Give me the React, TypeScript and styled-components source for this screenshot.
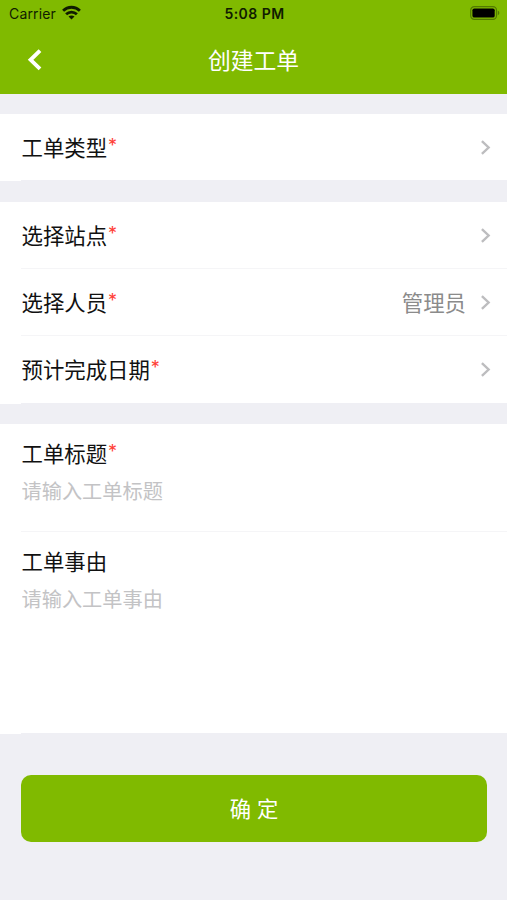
import React from "react";
import styled, { createGlobalStyle } from "styled-components";

const GREEN = "#80ba00";
const GROUND = "#efeff4";

const GlobalStyle = createGlobalStyle`
  * { box-sizing: border-box; }
  body {
    margin: 0;
    background: ${GROUND};
    font-family: Inter, "Noto Sans CJK SC", sans-serif;
  }
`;

const Screen = styled.main`
  width: 507px;
  height: 900px;
  overflow: hidden;
  background: ${GROUND};
`;

const Header = styled.header`
  height: 94px;
  background: ${GREEN};
`;

const StatusBar = styled.div`
  display: grid;
  grid-template-columns: 1fr auto 1fr;
  align-items: center;
  height: 27px;
  padding: 0 7px 0 9px;
  color: #101c00;
  font-size: 14px;
  line-height: 27px;
`;

const Carrier = styled.div`
  display: flex;
  align-items: center;
  gap: 6px;
  letter-spacing: 0.15px;

  svg {
    margin-bottom: 2px;
  }
`;

const Clock = styled.div`
  font-size: 14px;
  font-weight: 600;
  letter-spacing: 0.45px;
`;

const BatterySlot = styled.div`
  display: flex;
  justify-content: flex-end;
  padding-bottom: 1px;
`;

const NavBar = styled.div`
  display: grid;
  grid-template-columns: 60px 1fr 60px;
  align-items: center;
  height: 66px;
`;

const BackButton = styled.button`
  display: flex;
  height: 44px;
  padding: 0 0 0 27px;
  align-items: center;
  border: 0;
  background: none;
`;

const Title = styled.h1`
  margin: 0;
  padding-top: 2px;
  color: #fff;
  font-size: 22.8px;
  font-weight: 400;
  line-height: 34px;
  text-align: center;
`;

const Group = styled.section<{ $gap: number }>`
  margin-top: ${(p) => p.$gap}px;
  background: #fff;
`;

const Row = styled.div<{ $height: number; $last?: boolean }>`
  display: flex;
  align-items: center;
  height: ${(p) => p.$height}px;
  margin-left: 21px;
  padding: 0 16px 0 0.5px;
  border-bottom: 1px solid ${(p) => (p.$last ? GROUND : "#f5f5f7")};
`;

const Label = styled.span`
  padding-top: 1px;
  color: #111;
  font-size: 21.4px;
  line-height: 32px;
  white-space: nowrap;
`;

const Required = styled.span`
  margin-left: 1px;
  color: #ff4036;
  font-size: 18px;
  line-height: 1;
  vertical-align: 4px;
`;

const Value = styled.span`
  margin-left: auto;
  padding-top: 1px;
  color: #8b8b8b;
  font-size: 21.4px;
  line-height: 32px;
`;

const Arrow = styled.svg<{ $push: boolean }>`
  margin-left: ${(p) => (p.$push ? "auto" : "15px")};
  flex: none;
`;

const Field = styled.label<{ $height: number; $last?: boolean }>`
  display: flex;
  flex-direction: column;
  height: ${(p) => p.$height}px;
  margin-left: 21px;
  padding: 13px 20px 0 0.5px;
  border-bottom: 1px solid ${(p) => (p.$last ? GROUND : "#f5f5f7")};
`;

const Input = styled.input`
  height: 34px;
  margin-top: 4px;
  padding: 0;
  border: 0;
  outline: 0;
  background: transparent;
  color: #111;
  font: 400 20.2px/30px Inter, "Noto Sans CJK SC", sans-serif;

  &::placeholder {
    color: #c3c3c5;
    opacity: 1;
  }
`;

const Submit = styled.button`
  display: block;
  width: 466px;
  height: 67px;
  margin: 41px 0 0 21px;
  padding: 0;
  border: 0;
  border-radius: 10px;
  background: ${GREEN};
  color: #fff;
  font: 400 21.3px/32px Inter, "Noto Sans CJK SC", sans-serif;
`;

const WifiIcon = () => (
  <svg width="19" height="15" viewBox="0 0 19 15" fill="none" stroke="#101c00" strokeWidth="2.8">
    <path d="M1.1 5.7C5.8 1.1 13.2 1.1 17.9 5.7" />
    <path d="M4.1 9.2C7.1 6.3 11.9 6.3 14.9 9.2" />
    <path d="M6.5 11.6c1.7-1.6 4.3-1.6 6 0l-3 2.9z" fill="#101c00" stroke="none" />
  </svg>
);

const BatteryIcon = () => (
  <svg width="30" height="14" viewBox="0 0 30 14">
    <rect x=".7" y=".7" width="25.8" height="12.6" rx="3.6" fill="none" stroke="#527a00" strokeWidth="1.2" />
    <rect x="2.4" y="2.4" width="22.3" height="9.2" rx="1.9" fill="#000" />
    <path d="M27.8 4.8c2 .6 2 3.8 0 4.4z" fill="#527a00" />
  </svg>
);

const Chevron = ({ push = true }: { push?: boolean }) => (
  <Arrow $push={push} width="10" height="15" viewBox="0 0 10 15" fill="none" stroke="#bdbdbf" strokeWidth="2.4">
    <path d="M.9 1.2 7.6 7.5.9 13.8" />
  </Arrow>
);

interface LabelProps {
  text: string;
  required?: boolean;
}

const FieldLabel = ({ text, required }: LabelProps) => (
  <Label>
    {text}
    {required && <Required>*</Required>}
  </Label>
);

export default function App() {
  return (
    <>
      <GlobalStyle />
      <Screen>
        <Header>
          <StatusBar>
            <Carrier>
              Carrier
              <WifiIcon />
            </Carrier>
            <Clock>5:08 PM</Clock>
            <BatterySlot>
              <BatteryIcon />
            </BatterySlot>
          </StatusBar>
          <NavBar>
            <BackButton aria-label="返回">
              <svg width="16" height="22" viewBox="0 0 16 22" fill="none" stroke="#fff" strokeWidth="3.9">
                <path d="M13 1.7 3.6 10.8 13 19.9" />
              </svg>
            </BackButton>
            <Title>创建工单</Title>
          </NavBar>
        </Header>
        <Group $gap={20}>
          <Row $height={67} $last>
            <FieldLabel text="工单类型" required />
            <Chevron />
          </Row>
        </Group>
        <Group $gap={21}>
          <Row $height={67}>
            <FieldLabel text="选择站点" required />
            <Chevron />
          </Row>
          <Row $height={67}>
            <FieldLabel text="选择人员" required />
            <Value>管理员</Value>
            <Chevron push={false} />
          </Row>
          <Row $height={68} $last>
            <FieldLabel text="预计完成日期" required />
            <Chevron />
          </Row>
        </Group>
        <Group $gap={20}>
          <Field $height={108}>
            <FieldLabel text="工单标题" required />
            <Input placeholder="请输入工单标题" />
          </Field>
          <Field $height={202} $last>
            <FieldLabel text="工单事由" />
            <Input placeholder="请输入工单事由" />
          </Field>
        </Group>
        <Submit>确 定</Submit>
      </Screen>
    </>
  );
}
